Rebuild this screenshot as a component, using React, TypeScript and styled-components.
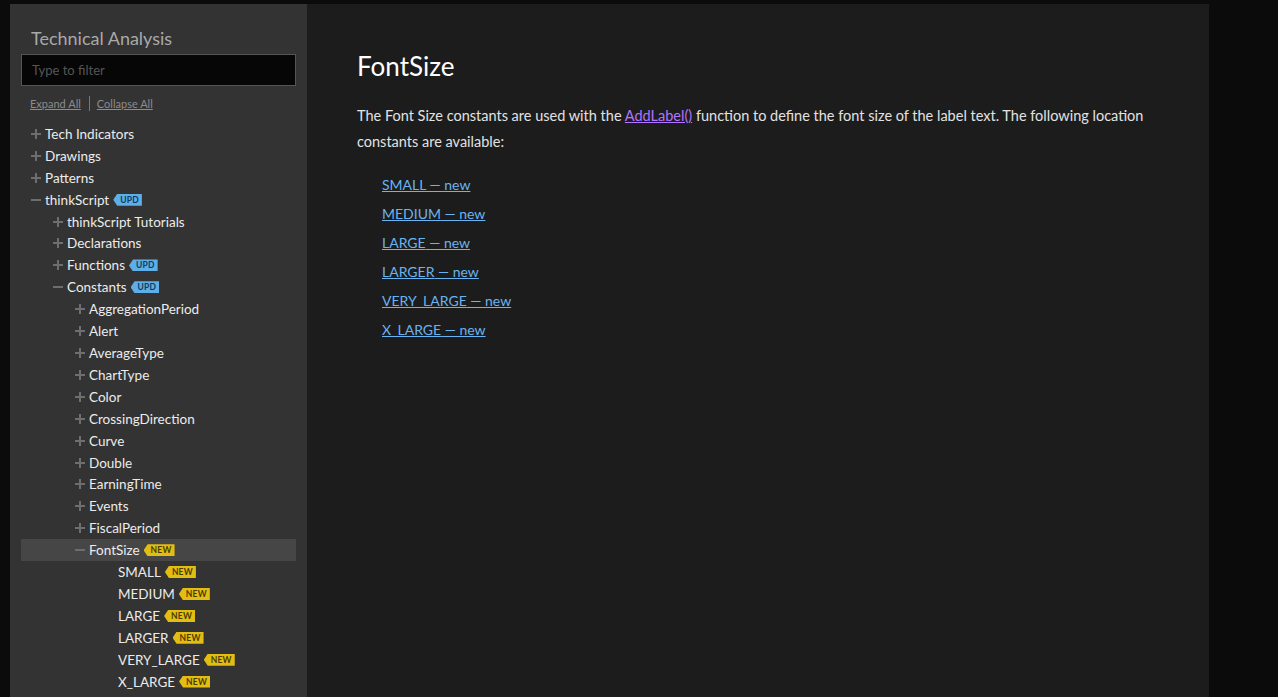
import React from 'react';
import styled, { createGlobalStyle } from 'styled-components';

const GlobalStyle = createGlobalStyle`
  html, body {
    margin: 0;
    padding: 0;
    background: #0b0b0b;
    font-family: Lato, 'Open Sans', sans-serif;
  }
`;

const Page = styled.div`
  display: flex;
  height: 697px;
  padding: 4px 0 0 10px;
  box-sizing: border-box;
  overflow: hidden;
`;

const Sidebar = styled.aside`
  width: 297px;
  flex-shrink: 0;
  background: #333333;
  padding: 0 11px;
  box-sizing: border-box;
`;

const SideTitle = styled.h2`
  margin: 0;
  padding: 22px 0 0 10px;
  height: 50px;
  box-sizing: border-box;
  font-size: 18px;
  font-weight: 400;
  color: #a9a9a9;
  line-height: 24px;
`;

const Filter = styled.input`
  display: block;
  width: 100%;
  height: 32px;
  box-sizing: border-box;
  background: #060606;
  border: 1px solid #555;
  padding: 0 10px;
  font-family: inherit;
  font-size: 13px;
  color: #ccc;
  outline: none;
  &::placeholder {
    color: #555;
  }
`;

const ToolRow = styled.div`
  display: flex;
  align-items: center;
  height: 16px;
  margin: 9px 0 12px 9px;
`;

const ToolLink = styled.a`
  font-size: 11px;
  color: #8c8c8c;
  text-decoration: underline;
  cursor: pointer;
`;

const Divider = styled.span`
  width: 1px;
  height: 15px;
  background: #777;
  margin: 0 7px 0 8px;
`;

const Tree = styled.ul`
  list-style: none;
  margin: 0;
  padding: 0;
`;

const Row = styled.li<{ $level: number; $active?: boolean }>`
  display: flex;
  align-items: center;
  height: 21.92px;
  padding-left: ${(p) => 10 + p.$level * 22}px;
  background: ${(p) => (p.$active ? '#464646' : 'transparent')};
  font-size: 13.5px;
  color: #ececec;
  white-space: nowrap;
`;

const Toggle = styled.span<{ $open?: boolean }>`
  position: relative;
  width: 10px;
  height: 10px;
  margin-right: 4px;
  flex-shrink: 0;
  &::before {
    content: '';
    position: absolute;
    left: 0;
    top: 4px;
    width: 10px;
    height: 2px;
    background: #6e6e6e;
  }
  &::after {
    content: '';
    position: absolute;
    left: 4px;
    top: 0;
    width: 2px;
    height: 10px;
    background: #6e6e6e;
    display: ${(p) => (p.$open ? 'none' : 'block')};
  }
`;

const Leaf = styled.span`
  width: 21px;
  flex-shrink: 0;
`;

const Badge = styled.span<{ $kind: 'upd' | 'new' }>`
  display: inline-flex;
  align-items: center;
  height: 12px;
  margin-left: 4px;
  padding: 0 3px 0 7px;
  font-size: 8.5px;
  font-weight: 700;
  letter-spacing: 0.2px;
  line-height: 12px;
  background: ${(p) => (p.$kind === 'upd' ? '#5eaee8' : '#e3bd12')};
  color: ${(p) => (p.$kind === 'upd' ? '#123a5c' : '#4a3c00')};
  clip-path: polygon(4px 0, 100% 0, 100% 100%, 4px 100%, 0 50%);
`;

const Main = styled.main`
  width: 902px;
  flex-shrink: 0;
  background: #1c1c1c;
  padding: 47px 50px 0 50px;
  box-sizing: border-box;
`;

const Title = styled.h1`
  margin: 0 0 22px;
  font-size: 26px;
  font-weight: 400;
  color: #ffffff;
  line-height: 30px;
`;

const Para = styled.p`
  margin: 0 0 19px;
  font-size: 14.5px;
  line-height: 26px;
  color: #e2e2e2;
`;

const InlineLink = styled.a`
  color: #b374ff;
  text-decoration: underline;
`;

const LinkList = styled.ul`
  list-style: none;
  margin: 0;
  padding: 0 0 0 25px;
`;

const LinkItem = styled.li`
  height: 29px;
  line-height: 20px;
`;

const ConstLink = styled.a`
  font-size: 14px;
  color: #69b4f0;
  text-decoration: underline;
  cursor: pointer;
`;

type Item = {
  label: string;
  level: number;
  kind: 'plus' | 'minus' | 'leaf';
  badge?: 'upd' | 'new';
  active?: boolean;
};

const items: Item[] = [
  { label: 'Tech Indicators', level: 0, kind: 'plus' },
  { label: 'Drawings', level: 0, kind: 'plus' },
  { label: 'Patterns', level: 0, kind: 'plus' },
  { label: 'thinkScript', level: 0, kind: 'minus', badge: 'upd' },
  { label: 'thinkScript Tutorials', level: 1, kind: 'plus' },
  { label: 'Declarations', level: 1, kind: 'plus' },
  { label: 'Functions', level: 1, kind: 'plus', badge: 'upd' },
  { label: 'Constants', level: 1, kind: 'minus', badge: 'upd' },
  { label: 'AggregationPeriod', level: 2, kind: 'plus' },
  { label: 'Alert', level: 2, kind: 'plus' },
  { label: 'AverageType', level: 2, kind: 'plus' },
  { label: 'ChartType', level: 2, kind: 'plus' },
  { label: 'Color', level: 2, kind: 'plus' },
  { label: 'CrossingDirection', level: 2, kind: 'plus' },
  { label: 'Curve', level: 2, kind: 'plus' },
  { label: 'Double', level: 2, kind: 'plus' },
  { label: 'EarningTime', level: 2, kind: 'plus' },
  { label: 'Events', level: 2, kind: 'plus' },
  { label: 'FiscalPeriod', level: 2, kind: 'plus' },
  { label: 'FontSize', level: 2, kind: 'minus', badge: 'new', active: true },
  { label: 'SMALL', level: 3, kind: 'leaf', badge: 'new' },
  { label: 'MEDIUM', level: 3, kind: 'leaf', badge: 'new' },
  { label: 'LARGE', level: 3, kind: 'leaf', badge: 'new' },
  { label: 'LARGER', level: 3, kind: 'leaf', badge: 'new' },
  { label: 'VERY_LARGE', level: 3, kind: 'leaf', badge: 'new' },
  { label: 'X_LARGE', level: 3, kind: 'leaf', badge: 'new' },
];

const constants = ['SMALL', 'MEDIUM', 'LARGE', 'LARGER', 'VERY_LARGE', 'X_LARGE'];

const App: React.FunctionComponent = () => (
  <Page>
    <GlobalStyle />
    <Sidebar>
      <SideTitle>Technical Analysis</SideTitle>
      <Filter placeholder="Type to filter" />
      <ToolRow>
        <ToolLink>Expand All</ToolLink>
        <Divider />
        <ToolLink>Collapse All</ToolLink>
      </ToolRow>
      <Tree>
        {items.map((it) => (
          <Row key={it.label} $level={it.level} $active={it.active}>
            {it.kind === 'leaf' ? <Leaf /> : <Toggle $open={it.kind === 'minus'} />}
            {it.label}
            {it.badge && <Badge $kind={it.badge}>{it.badge.toUpperCase()}</Badge>}
          </Row>
        ))}
      </Tree>
    </Sidebar>
    <Main>
      <Title>FontSize</Title>
      <Para>
        The Font Size constants are used with the <InlineLink>AddLabel()</InlineLink> function to
        define the font size of the label text. The following location constants are available:
      </Para>
      <LinkList>
        {constants.map((c) => (
          <LinkItem key={c}>
            <ConstLink>{c} — new</ConstLink>
          </LinkItem>
        ))}
      </LinkList>
    </Main>
  </Page>
);

export default App;
